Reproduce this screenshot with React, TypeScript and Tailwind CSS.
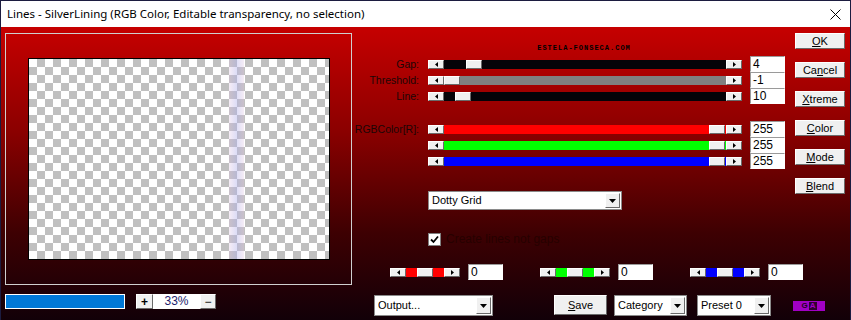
import React from "react";

const ui = "font-['Liberation_Sans',Arial,sans-serif]";
const bevel =
  "bg-[#f0f0f0] border border-t-white border-l-white border-r-[#6a6a6a] border-b-[#6a6a6a]";

function Tri({ dir }: { dir: "l" | "r" | "d" }) {
  if (dir === "d")
    return (
      <svg width="7" height="4" viewBox="0 0 7 4">
        <polygon points="0,0 7,0 3.5,4" fill="#000" />
      </svg>
    );
  return (
    <svg width="3" height="5" viewBox="0 0 3 5">
      <polygon points={dir === "l" ? "3,0 3,5 0,2.5" : "0,0 0,5 3,2.5"} fill="#000" />
    </svg>
  );
}

function ArrowBtn({ dir }: { dir: "l" | "r" }) {
  return (
    <div className={`${bevel} w-[16px] h-[9px] shrink-0 flex items-center justify-center`}>
      <Tri dir={dir} />
    </div>
  );
}

function Slider({ color, pre, w }: { color: string; pre: string; w: string }) {
  return (
    <div className={`flex h-[9px] shrink-0 ${w}`}>
      <ArrowBtn dir="l" />
      <div className={`${pre} ${color} shrink-0`} />
      <div className={`${bevel} w-[16px] h-[9px] shrink-0`} />
      <div className={`flex-1 ${color}`} />
      <ArrowBtn dir="r" />
    </div>
  );
}

function ValueBox({ v }: { v: string }) {
  return (
    <div className="w-[35px] h-[16px] shrink-0 bg-white border border-[#9a9a9a] border-b-white border-r-white text-[12px] leading-[14px] pl-[2px] text-black">
      {v}
    </div>
  );
}

function Dropdown({ label, w, h }: { label: string; w: string; h: string }) {
  return (
    <div className={`${w} ${h} shrink-0 bg-white border border-[#8a8a8a] flex items-center pl-[3px] pr-[1px]`}>
      <span className="flex-1 text-[11px] text-black truncate">{label}</span>
      <div className={`${bevel} w-[15px] h-[calc(100%-2px)] flex items-center justify-center`}>
        <Tri dir="d" />
      </div>
    </div>
  );
}

function SideButton({ children }: { children: React.ReactNode }) {
  return (
    <div className={`${bevel} w-[50px] h-[16px] flex items-center justify-center text-[11px] text-black`}>
      {children}
    </div>
  );
}

const rows = [
  { label: "Gap:", color: "bg-[#050308]", pre: "w-[22px]", v: "4" },
  { label: "Threshold:", color: "bg-[#808080]", pre: "w-[0px]", v: "-1" },
  { label: "Line:", color: "bg-[#050308]", pre: "w-[11px]", v: "10" },
];

const rgb = [
  { label: "RGBColor[R]:", color: "bg-[#ff0000]" },
  { label: "", color: "bg-[#00ff00]" },
  { label: "", color: "bg-[#0000ff]" },
];

const smalls = ["bg-[#ff0000]", "bg-[#00ff00]", "bg-[#0000ff]"];

export default function App() {
  return (
    <div className={`${ui} w-[851px] h-[320px] flex flex-col border-x border-t border-[#1c1c40] overflow-hidden`}>
      {/* title bar */}
      <div className="h-[26px] bg-white flex items-center pl-[6px] pr-[9px] shrink-0">
        <span className="flex-1 text-[11.5px] text-black font-['Noto_Sans',sans-serif]">
          Lines - SilverLining (RGB Color, Editable transparency, no selection)
        </span>
        <svg width="11" height="11" viewBox="0 0 11 11">
          <path d="M0.5 0.5 L10.5 10.5 M10.5 0.5 L0.5 10.5" stroke="#000" strokeWidth="1" />
        </svg>
      </div>

      {/* body */}
      <div className="flex-1 flex flex-col bg-[linear-gradient(180deg,#c60000_0%,#8a0000_36%,#3e0002_70%,#120008_100%)]">
        <div className="flex h-[258px] shrink-0">
          {/* preview */}
          <div className="ml-[4px] mt-[6px] w-[347px] h-[252px] border border-[#cfcfcf] flex items-center justify-center shrink-0">
            <div className="relative w-[302px] h-[202px] border border-black bg-[conic-gradient(#c0c0c0_25%,#ffffff_0_50%,#c0c0c0_0_75%,#ffffff_0)] bg-size-[16px_16px]">
              <div className="absolute top-0 bottom-0 left-[200px] w-[15px] bg-[linear-gradient(90deg,rgba(225,195,225,0.3),rgba(175,175,235,0.42),rgba(225,195,225,0.3))]" />
            </div>
          </div>

          {/* controls */}
          <div className="ml-[1px] w-[442px] shrink-0 flex flex-col pt-[17px]">
            <div className="ml-[181px] w-[100px] h-[9px] leading-[9px] text-center text-[7px] font-bold tracking-[1px] text-black font-['Liberation_Mono',monospace]">
              ESTELA-FONSECA.COM
            </div>
            <div className="mt-[3px] flex flex-col">
              {rows.map((r) => (
                <div key={r.label} className="flex items-center h-[16px]">
                  <div className="w-[66px] text-right text-[10.5px] text-[#1a0606] leading-[12px]">{r.label}</div>
                  <div className="ml-[9px]">
                    <Slider color={r.color} pre={r.pre} w="w-[314px]" />
                  </div>
                  <div className="ml-[8px]">
                    <ValueBox v={r.v} />
                  </div>
                </div>
              ))}
            </div>
            <div className="mt-[17px] flex flex-col">
              {rgb.map((r) => (
                <div key={r.color} className="flex items-center h-[16px]">
                  <div className="w-[66px] text-right text-[10.5px] text-[#1a0606] leading-[12px] whitespace-nowrap">
                    {r.label}
                  </div>
                  <div className="ml-[9px]">
                    <Slider color={r.color} pre="w-[265px]" w="w-[314px]" />
                  </div>
                  <div className="ml-[8px]">
                    <ValueBox v="255" />
                  </div>
                </div>
              ))}
            </div>
            <div className="mt-[22px] ml-[75px]">
              <Dropdown label="Dotty Grid" w="w-[194px]" h="h-[19px]" />
            </div>
            <div className="mt-[20px] ml-[75px] flex items-center gap-[5px]">
              <div className="w-[13px] h-[13px] bg-white border border-[#808080] flex items-center justify-center">
                <svg width="9" height="9" viewBox="0 0 9 9">
                  <path d="M1 4.5 L3.5 7 L8 1.5" stroke="#000" strokeWidth="1.8" fill="none" />
                </svg>
              </div>
              <span className="text-[12px] text-[#260000]">Create lines not gaps</span>
            </div>
            <div className="mt-[16px] ml-[37px] flex items-center gap-[37px]">
              {smalls.map((c) => (
                <div key={c} className="flex items-center gap-[8px] shrink-0">
                  <Slider color={c} pre="w-[11px]" w="w-[70px]" />
                  <ValueBox v="0" />
                </div>
              ))}
            </div>
          </div>

          {/* side buttons */}
          <div className="flex flex-col pt-[6px] gap-[13px]">
            <SideButton><span className="underline">O</span>K</SideButton>
            <SideButton>Ca<span className="underline">n</span>cel</SideButton>
            <SideButton><span className="underline">X</span>treme</SideButton>
            <SideButton><span className="underline">C</span>olor</SideButton>
            <SideButton><span className="underline">M</span>ode</SideButton>
            <SideButton><span className="underline">B</span>lend</SideButton>
          </div>
        </div>

        {/* bottom bar */}
        <div className="flex items-start flex-1">
          <div className="ml-[4px] mt-[9px] w-[120px] h-[15px] bg-[#0078d7] border border-white" />
          <div className="ml-[11px] mt-[9px] flex h-[15px]">
            <div className={`${bevel} w-[17px] h-[15px] flex items-center justify-center text-[12px] font-bold text-black leading-none`}>+</div>
            <div className="w-[47px] h-[15px] bg-white text-[#1c1c6c] text-[12px] leading-[15px] text-center">33%</div>
            <div className={`${bevel} w-[16px] h-[15px] flex items-center justify-center text-[12px] text-black leading-none`}>−</div>
          </div>
          <div className="ml-[158px] mt-[10px]">
            <Dropdown label="Output..." w="w-[119px]" h="h-[21px]" />
          </div>
          <div className={`${bevel} ml-[61px] mt-[10px] w-[53px] h-[20px] flex items-center justify-center text-[11px] text-black`}>
            <span className="underline">S</span>ave
          </div>
          <div className="ml-[7px] mt-[10px]">
            <Dropdown label="Category" w="w-[73px]" h="h-[21px]" />
          </div>
          <div className="ml-[10px] mt-[10px]">
            <Dropdown label="Preset 0" w="w-[74px]" h="h-[21px]" />
          </div>
          <div className="ml-[22px] mt-[16px] w-[32px] h-[10px] bg-[#a000c4] flex items-center justify-center text-[8px] font-bold leading-none text-[#200020]">
            G<span className="text-[#a000c4] bg-[#300030] px-[1px] ml-[1px]">A</span>
          </div>
        </div>
      </div>
    </div>
  );
}
